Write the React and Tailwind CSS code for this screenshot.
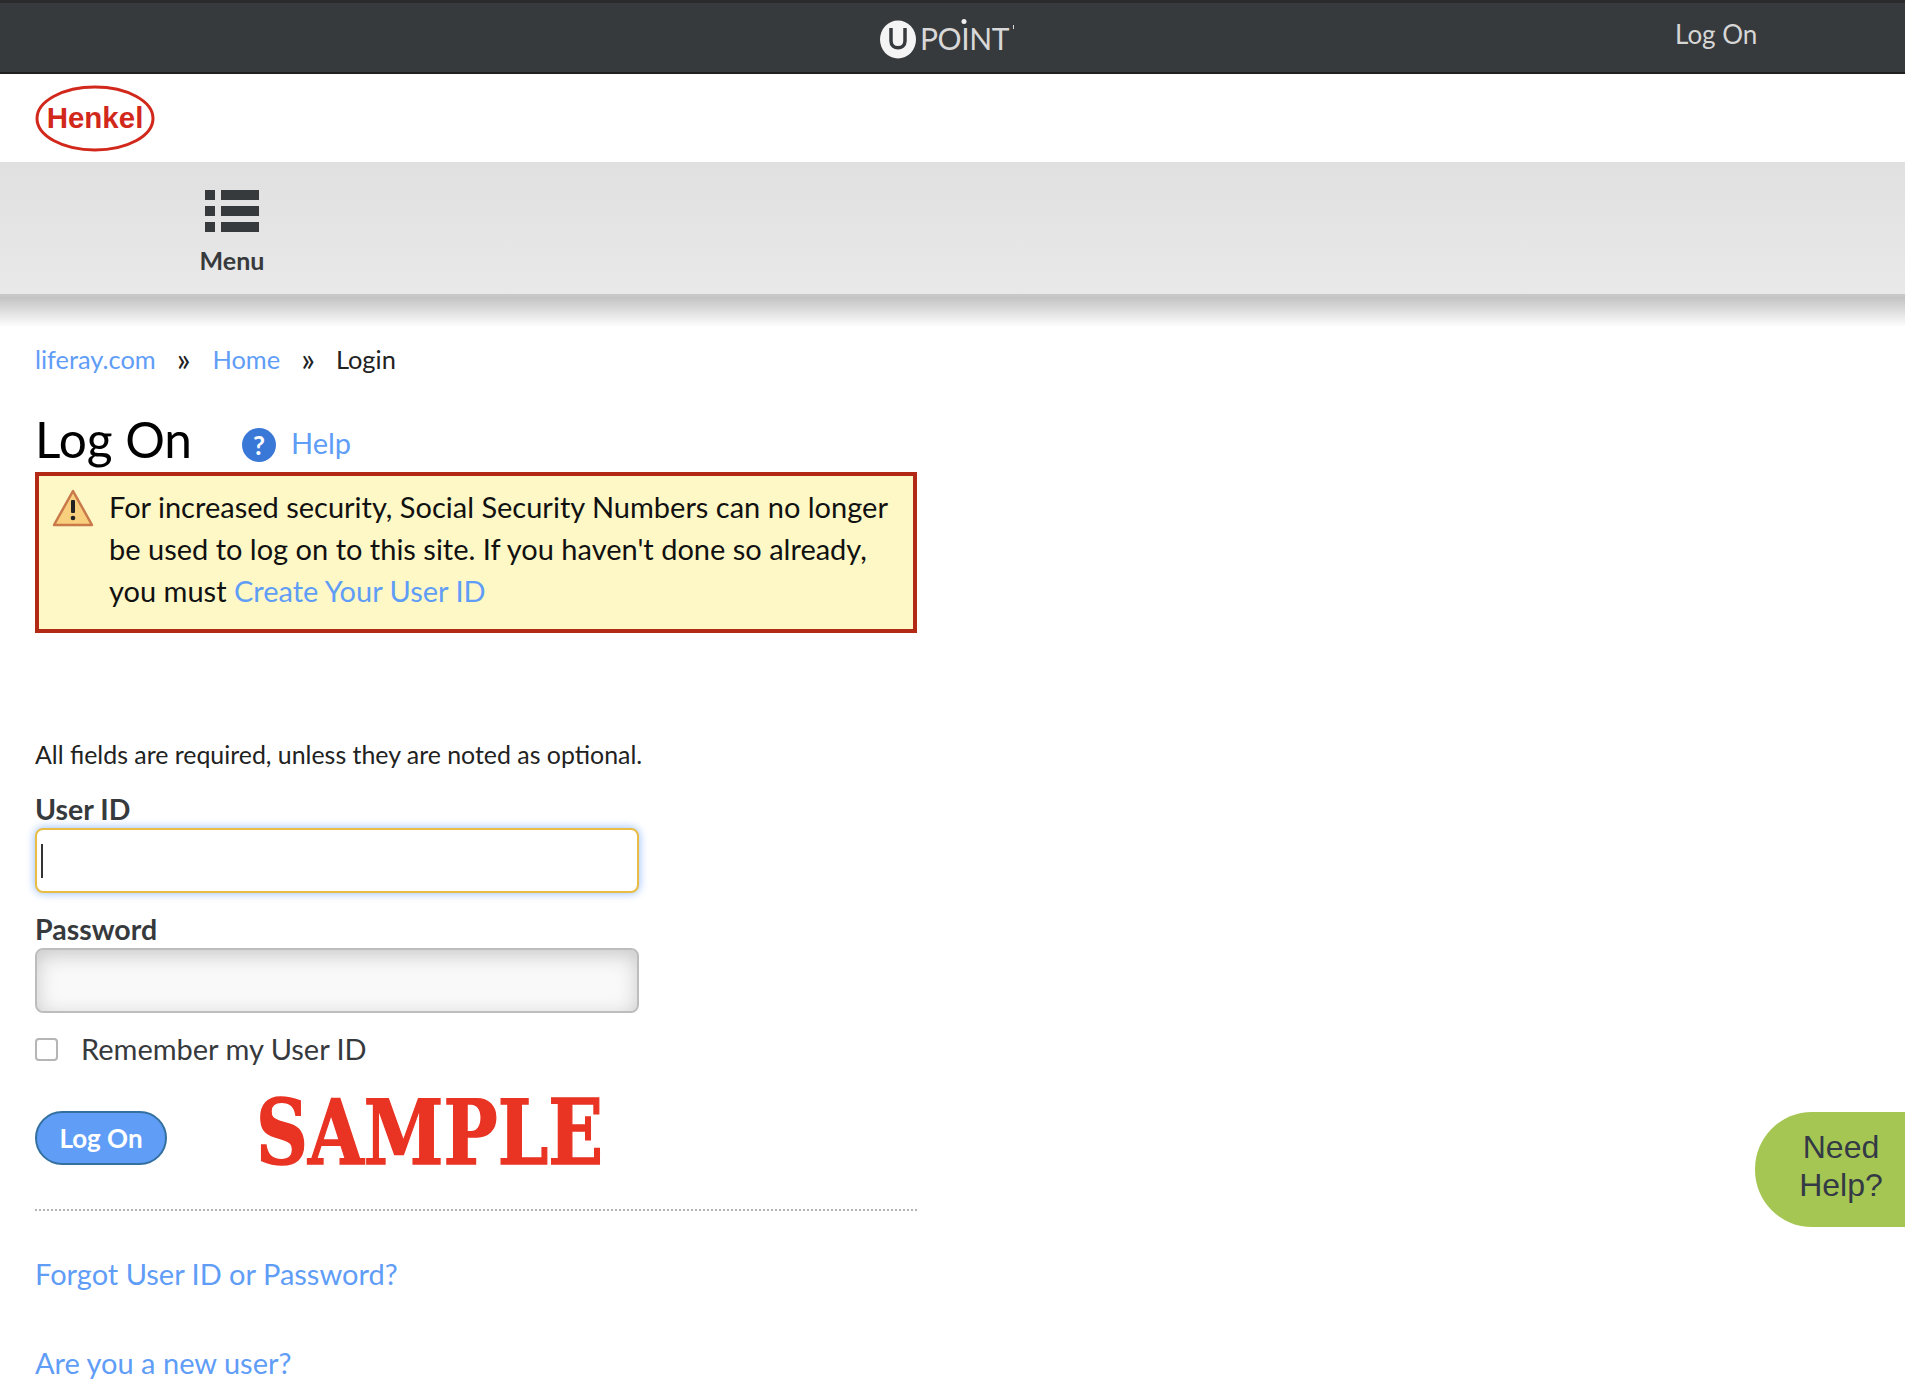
const font = { fontFamily: "Lato, sans-serif" };

const linkClass = "text-[#5f9df7]";

const UpointLogo = () => (
    <svg width="140" height="42" viewBox="0 0 140 42" className="mr-[9px] block">
        <ellipse cx="20" cy="22.5" rx="18" ry="19" fill="#f4f4f4" />
        <path d="M13 11v13c0 9 14 9 14 0V11" fill="none" stroke="#373a3d" strokeWidth="3.5" />
        <text x="42" y="33" fontFamily="Lato, sans-serif" fontSize="30" letterSpacing="-0.4" fill="#d8d8d8">
            POINT
        </text>
        <circle cx="86" cy="4.5" r="2.5" fill="#f0f0f0" />
        <rect x="135" y="8" width="1" height="4" fill="#d8d8d8" />
    </svg>
);

const HenkelLogo = () => (
    <svg width="120" height="67" viewBox="0 0 120 67" className="block">
        <ellipse cx="60" cy="33.5" rx="58" ry="31.5" fill="#fff" stroke="#d2281c" strokeWidth="3" />
        <text x="60" y="42.5" textAnchor="middle" fontFamily="Liberation Sans, sans-serif" fontWeight="700" fontSize="29.5" fill="#d2281c">
            Henkel
        </text>
    </svg>
);

const MenuIcon = () => (
    <svg width="54" height="42" viewBox="0 0 54 42" fill="#373a3d" className="block">
        <rect x="0" y="0" width="10" height="10" />
        <rect x="16" y="0" width="38" height="10" />
        <rect x="0" y="16" width="10" height="10" />
        <rect x="16" y="16" width="38" height="10" />
        <rect x="0" y="32" width="10" height="10" />
        <rect x="16" y="32" width="38" height="10" />
    </svg>
);

const WarningIcon = () => (
    <svg width="42" height="38" viewBox="0 0 42 38" className="mt-[3px] block shrink-0">
        <path d="M21 2 40 36H2Z" fill="#f8cf7c" stroke="#c9794a" strokeWidth="2.5" strokeLinejoin="round" />
        <rect x="19" y="11" width="4" height="13" rx="1" fill="#222" />
        <circle cx="21" cy="29" r="2.3" fill="#222" />
    </svg>
);

const App = () => {
    return (
        <div className="relative h-[1383px] overflow-hidden bg-white" style={font}>
            {/* Top bar */}
            <header className="relative flex h-[74px] items-center justify-center border-t-[3px] border-b-2 border-t-[#2b2a2c] border-b-[#1f1f20] bg-[#373a3d]">
                <UpointLogo />
                <a className="absolute left-[1675px] top-[13px] text-[26px] leading-[36px] text-[#d6d6d6]">Log On</a>
            </header>

            {/* Logo */}
            <div className="flex h-[88px] items-center pl-[35px]">
                <HenkelLogo />
            </div>

            {/* Menu */}
            <nav className="h-[135px] border-b-[3px] border-b-[#c8c8c8] bg-gradient-to-b from-[#e0e0e0] to-[#e9e9e9] pl-[199px] pt-[28px]">
                <div className="flex w-[66px] flex-col items-center">
                    <MenuIcon />
                    <span className="mt-[14px] text-[25px] font-bold leading-[28px] text-[#373a3d]">Menu</span>
                </div>
            </nav>
            <div className="h-[30px] bg-gradient-to-b from-[#c2c2c2] to-white" />

            <main className="pl-[35px]">
                {/* Breadcrumb */}
                <div className="mt-[16px] flex h-[32px] items-center text-[25.4px] leading-[32px] text-[#222]">
                    <a className={linkClass}>liferay.com</a>
                    <span className="ml-[21px] text-[32px]">»</span>
                    <a className={`ml-[22px] ${linkClass}`}>Home</a>
                    <span className="ml-[21px] text-[32px]">»</span>
                    <span className="ml-[21px]">Login</span>
                </div>

                {/* Title */}
                <div className="mt-[36px] flex h-[61px] items-center">
                    <h1 className="mt-[-6px] text-[49.6px] font-normal leading-[60px] text-black">Log On</h1>
                    <span className="ml-[50px] mt-[6px] flex h-[34px] w-[34px] items-center justify-center rounded-full bg-[#3a78d8] text-[26px] font-bold leading-none text-white">?</span>
                    <a className={`ml-[15px] mt-[2px] text-[29px] leading-[36px] ${linkClass}`}>Help</a>
                </div>

                {/* Alert */}
                <div className="flex h-[161px] w-[882px] border-4 border-[#b22a16] bg-[#fdf8c6] pl-[13px] pt-[10px]">
                    <WarningIcon />
                    <p className="ml-[15px] text-[29px] leading-[42px] text-[#111]">
                        For increased security, Social Security Numbers can no longer
                        <br />
                        be used to log on to this site. If you haven't done so already,
                        <br />
                        you must <a className={linkClass}>Create Your User ID</a>
                    </p>
                </div>

                <p className="mt-[105px] text-[24.9px] leading-[32px] text-[#222]">All fields are required, unless they are noted as optional.</p>

                {/* Form */}
                <label className="mt-[21px] block text-[28.5px] font-bold leading-[36px] text-[#373a3d]">User ID</label>
                <div className="mt-[1px] flex h-[65px] w-[604px] items-center rounded-[8px] border-2 border-[#e8bc45] bg-white pl-[4px] shadow-[0_0_10px_#8fb9fb]">
                    <span className="h-[34px] w-[2px] bg-[#333]" />
                </div>
                <label className="mt-[18px] block text-[28.5px] font-bold leading-[36px] text-[#373a3d]">Password</label>
                <input type="password" className="mt-[1px] block h-[65px] w-[604px] rounded-[8px] border-2 border-[#bdbdbd] bg-[#f9f9f9] shadow-[inset_0_5px_20px_#c8c8c8]" />

                <div className="mt-[24px] flex h-[24px] items-center">
                    <span className="h-[23px] w-[23px] rounded-[4px] border-2 border-[#b5b5b5] bg-white" />
                    <span className="ml-[23px] text-[29px] leading-[36px] text-[#373a3d]">Remember my User ID</span>
                </div>

                {/* Submit */}
                <div className="mt-[38px] flex h-[66px] items-end">
                    <button className="h-[54px] w-[132px] rounded-[27px] border-2 border-[#34709f] bg-[#5f9df7] text-[26px] font-bold text-white">Log On</button>
                    <span className="ml-[89px] inline-block origin-left scale-x-[0.8] text-[90px] font-bold leading-[66px] text-[#e93323] [-webkit-text-stroke:1.5px_#e93323]" style={{ fontFamily: "DejaVu Serif, serif" }}>SAMPLE</span>
                </div>

                <div className="mt-[44px] w-[882px] border-t-2 border-dotted border-t-[#b5b5b5]" />

                <a className={`mt-[45px] block text-[29px] leading-[36px] ${linkClass}`}>Forgot User ID or Password?</a>
                <a className={`mt-[53px] block text-[29px] leading-[36px] ${linkClass}`}>Are you a new user?</a>
            </main>

            {/* Need help tab */}
            <div className="absolute left-[1755px] top-[1112px] flex h-[115px] w-[150px] items-center justify-center rounded-l-[57px] bg-[#a6c653] pb-[7px] pl-[22px] text-center text-[32px] leading-[38px] text-[#333a45]" style={{ fontFamily: "Liberation Sans, sans-serif" }}>
                Need
                <br />
                Help?
            </div>
        </div>
    );
};

export default App;
